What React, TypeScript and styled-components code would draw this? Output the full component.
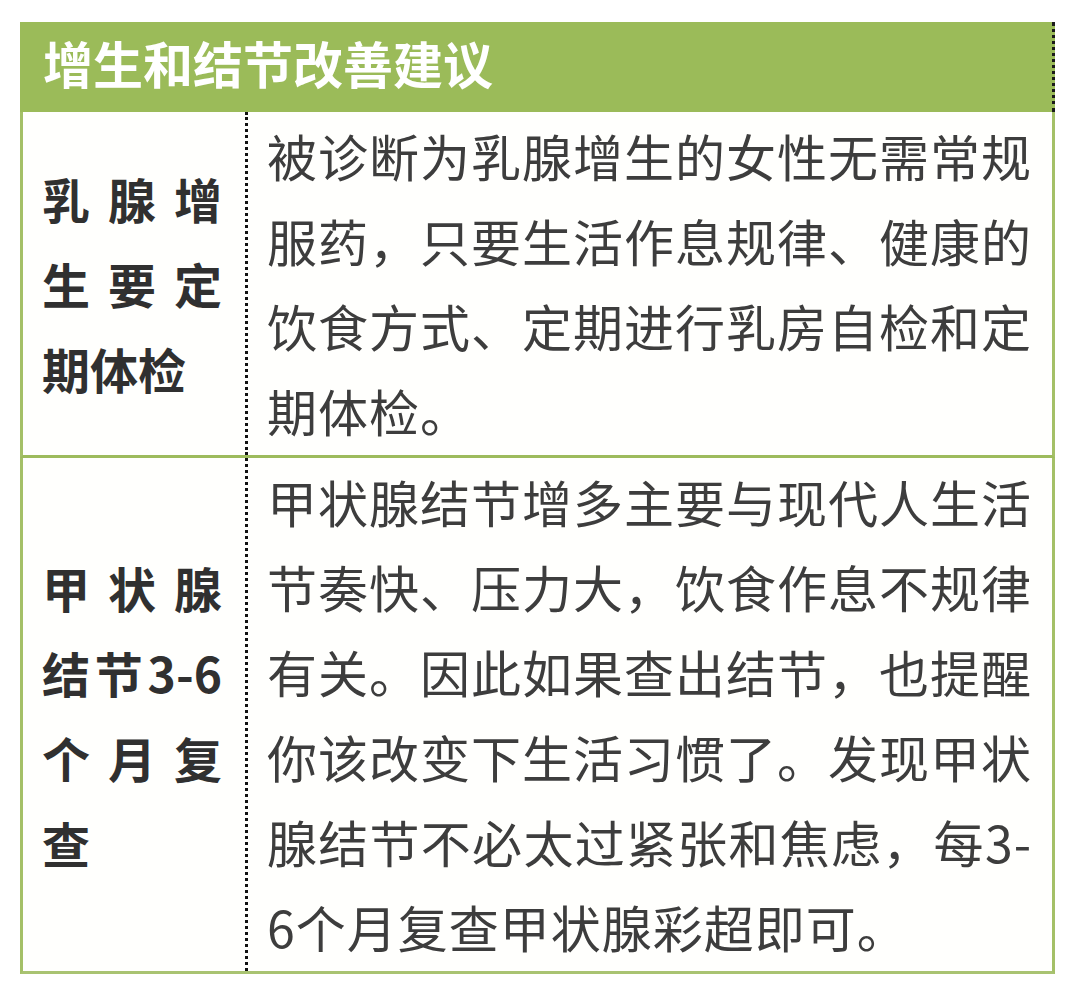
import React from 'react';
import styled, { createGlobalStyle } from 'styled-components';

const GlobalStyle = createGlobalStyle`
  html, body {
    margin: 0;
    padding: 0;
    background: #ffffff;
  }
  body {
    font-family: "Noto Sans CJK SC", "Noto Sans", sans-serif;
  }
`;

const Page = styled.div`
  width: 1080px;
  height: 999px;
  padding: 22px 0 0 20px;
  box-sizing: border-box;
`;

const Table = styled.div`
  width: 1035px;
  display: flex;
  flex-direction: column;
`;

const Header = styled.div`
  height: 90px;
  box-sizing: border-box;
  background: #9bbb59;
  border-left: 3px solid #9bbb59;
  border-right: 3px dotted #1a1a1a;
  display: flex;
  align-items: center;
  padding: 0 0 10px 20px;
  color: #ffffff;
  font-size: 50px;
  font-weight: 700;
  line-height: 1;
`;

const Row = styled.div<{ $last?: boolean }>`
  display: grid;
  grid-template-columns: 225px 1fr;
  border-left: 3px solid #a4c067;
  border-right: 3px solid #a4c067;
  border-bottom: 3px solid ${(p) => (p.$last ? '#a9c372' : '#9dbb5c')};
  background: #fffffd;
`;

const Label = styled.div`
  box-sizing: border-box;
  border-right: 3px dotted #111111;
  padding: 0 23px 0 19px;
  display: flex;
  flex-direction: column;
  justify-content: center;
  font-size: 48px;
  font-weight: 700;
  color: #303030;
  line-height: 85px;
`;

const Body = styled.div`
  padding: 1px 20px 2px 19px;
  font-size: 50px;
  letter-spacing: 1px;
  font-weight: 400;
  color: #3d3d3d;
  line-height: 85px;
`;

const Line = styled.div<{ $end?: boolean }>`
  white-space: nowrap;
  text-align: justify;
  text-align-last: ${(p) => (p.$end ? 'left' : 'justify')};
`;

type Item = { label: string[]; text: string[] };

const items: Item[] = [
  {
    label: ['乳腺增', '生要定', '期体检'],
    text: [
      '被诊断为乳腺增生的女性无需常规',
      '服药，只要生活作息规律、健康的',
      '饮食方式、定期进行乳房自检和定',
      '期体检。',
    ],
  },
  {
    label: ['甲状腺', '结节3-6', '个月复', '查'],
    text: [
      '甲状腺结节增多主要与现代人生活',
      '节奏快、压力大，饮食作息不规律',
      '有关。因此如果查出结节，也提醒',
      '你该改变下生活习惯了。发现甲状',
      '腺结节不必太过紧张和焦虑，每3-',
      '6个月复查甲状腺彩超即可。',
    ],
  },
];

export default function App() {
  return (
    <Page>
      <GlobalStyle />
      <Table>
        <Header>增生和结节改善建议</Header>
        {items.map((item, i) => (
          <Row key={i} $last={i === items.length - 1}>
            <Label>
              {item.label.map((l, j) => (
                <Line key={j} $end={j === item.label.length - 1}>
                  {l}
                </Line>
              ))}
            </Label>
            <Body>
              {item.text.map((t, j) => (
                <Line key={j} $end={j === item.text.length - 1}>
                  {t}
                </Line>
              ))}
            </Body>
          </Row>
        ))}
      </Table>
    </Page>
  );
}
